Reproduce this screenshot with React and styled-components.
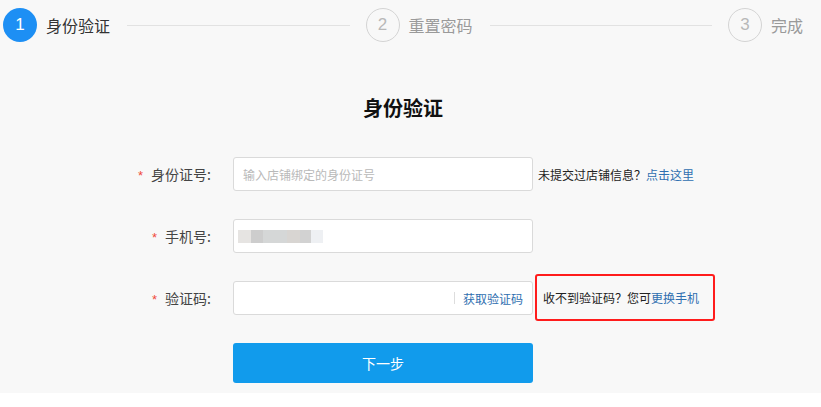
import React from "react";
import styled, { createGlobalStyle } from "styled-components";

const Global = createGlobalStyle`
  html, body { margin: 0; padding: 0; background: #ffffff; }
  body { font-family: "Microsoft YaHei", "Noto Sans CJK SC", "Noto Sans", sans-serif; }
  * { box-sizing: border-box; }
`;

const Page = styled.div`
  background: #f8f8f8;
  padding-bottom: 10px;
  width: 821px;
`;

const Steps = styled.div`
  display: flex;
  align-items: center;
  height: 50px;
  padding: 0 18px 0 3px;
`;

const Circle = styled.div`
  width: 34px;
  height: 34px;
  border-radius: 50%;
  flex: none;
  display: flex;
  align-items: center;
  justify-content: center;
  font-family: "Liberation Sans", Arial, sans-serif;
  font-size: 17px;
  background: ${(p) => (p.$active ? "#1d8ff4" : "transparent")};
  color: ${(p) => (p.$active ? "#ffffff" : "#b8b8b8")};
  border: ${(p) => (p.$active ? "none" : "1px solid #d4d4d4")};
`;

const StepLabel = styled.span`
  margin-left: 9px;
  font-size: 16px;
  line-height: 20px;
  color: ${(p) => (p.$active ? "#333333" : "#9a9a9a")};
  white-space: nowrap;
`;

const StepLine = styled.div`
  flex: 1;
  height: 1px;
  background: #e2e2e2;
  margin: 0 16px 0 17px;
`;

const Title = styled.h2`
  margin: 44px 0 0;
  font-size: 20px;
  line-height: 28px;
  font-weight: bold;
  color: #111111;
  text-align: center;
  padding-right: 15px;
`;

const Form = styled.div`
  display: flex;
  flex-direction: column;
  gap: 28px;
  margin-top: 35px;
`;

const Row = styled.div`
  display: flex;
  align-items: center;
  height: 34px;
`;

const Label = styled.label`
  width: 211px;
  flex: none;
  text-align: right;
  font-size: 14px;
  color: #444444;
  margin-right: 22px;
  white-space: nowrap;
`;

const Star = styled.span`
  color: #f04a3a;
  font-size: 13px;
  margin-right: 8px;
  font-family: "Liberation Sans", Arial, sans-serif;
`;

const InputBox = styled.div`
  width: 300px;
  height: 34px;
  flex: none;
  background: #ffffff;
  border: 1px solid #dadada;
  border-radius: 3px;
  display: flex;
  align-items: center;
  padding: 0 9px 0 9px;
`;

const Placeholder = styled.span`
  font-size: 12px;
  color: #b9b9b9;
  flex: 1;
`;

const Mosaic = styled.div`
  display: flex;
  height: 13px;
  margin-left: -5px;
`;

const Pixel = styled.div`
  width: ${(p) => p.$w}px;
  height: 100%;
  background: ${(p) => p.$c};
`;

const Spacer = styled.div`
  flex: 1;
`;

const Divider = styled.div`
  width: 1px;
  height: 12px;
  background: #dddddd;
  margin-right: 8px;
`;

const CodeLink = styled.span`
  font-size: 12px;
  color: #2f6fb0;
  white-space: nowrap;
`;

const Helper = styled.div`
  font-size: 12px;
  color: #222222;
  white-space: nowrap;
  display: flex;
  align-items: center;
  margin-left: ${(p) => (p.$highlight ? "2px" : "5px")};
  ${(p) =>
    p.$highlight &&
    `
    height: 47px;
    border: 2.5px solid #ff1c1c;
    border-radius: 3px;
    padding: 0 14px 0 6px;
    margin-top: -1px;
  `}
`;

const Link = styled.a`
  color: #2f6fb0;
  text-decoration: none;
`;

const ButtonRow = styled.div`
  display: flex;
  padding-left: 233px;
`;

const Button = styled.button`
  width: 300px;
  height: 40px;
  border: none;
  border-radius: 3px;
  background: #119bec;
  color: #ffffff;
  font-family: inherit;
  font-size: 14px;
`;

const pixels = [
  { w: 13, c: "#e6e4e2" },
  { w: 12, c: "#cdcdcd" },
  { w: 24, c: "#d5d7d7" },
  { w: 13, c: "#d8d5d2" },
  { w: 11, c: "#d2d2d2" },
  { w: 12, c: "#eef0f3" },
];

export default function App() {
  return (
    <>
      <Global />
      <Page>
        <Steps>
          <Circle $active>1</Circle>
          <StepLabel $active>身份验证</StepLabel>
          <StepLine />
          <Circle>2</Circle>
          <StepLabel>重置密码</StepLabel>
          <StepLine />
          <Circle>3</Circle>
          <StepLabel>完成</StepLabel>
        </Steps>

        <Title>身份验证</Title>

        <Form>
          <Row>
            <Label>
              <Star>*</Star>身份证号:
            </Label>
            <InputBox>
              <Placeholder>输入店铺绑定的身份证号</Placeholder>
            </InputBox>
            <Helper>
              未提交过店铺信息？<Link href="#">点击这里</Link>
            </Helper>
          </Row>

          <Row>
            <Label>
              <Star>*</Star>手机号:
            </Label>
            <InputBox>
              <Mosaic>
                {pixels.map((p, i) => (
                  <Pixel key={i} $w={p.w} $c={p.c} />
                ))}
              </Mosaic>
            </InputBox>
          </Row>

          <Row>
            <Label>
              <Star>*</Star>验证码:
            </Label>
            <InputBox>
              <Spacer />
              <Divider />
              <CodeLink>获取验证码</CodeLink>
            </InputBox>
            <Helper $highlight>
              收不到验证码？您可<Link href="#">更换手机</Link>
            </Helper>
          </Row>

          <ButtonRow>
            <Button>下一步</Button>
          </ButtonRow>
        </Form>
      </Page>
    </>
  );
}
